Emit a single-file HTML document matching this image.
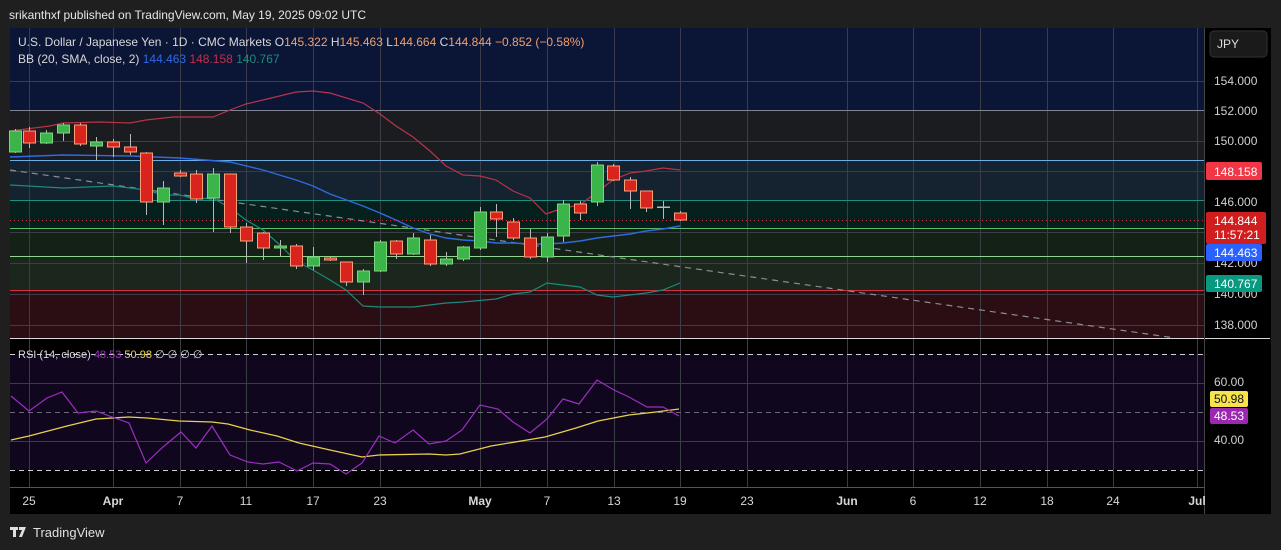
<!DOCTYPE html>
<html><head><meta charset="utf-8"><style>
html,body{margin:0;padding:0;background:#1f1f1f;width:1281px;height:550px;overflow:hidden}
svg{position:absolute;left:0;top:0}
text{font-family:"Liberation Sans",sans-serif}
</style></head><body>
<svg id="s" width="1281" height="550" viewBox="0 0 1281 550" xmlns="http://www.w3.org/2000/svg">
<rect width="1281" height="550" fill="#1f1f1f"/>
<text x="9" y="19" fill="#e6e6e6" font-size="12" textLength="357">srikanthxf published on TradingView.com, May 19, 2025 09:02 UTC</text>
<rect x="10" y="28" width="1261" height="486" fill="#000"/>
<rect x="10" y="28" width="1194" height="82" fill="#0b1536"/>
<rect x="10" y="110" width="1194" height="50" fill="#1b1c20"/>
<rect x="10" y="160" width="1194" height="40" fill="#15222f"/>
<rect x="10" y="200" width="1194" height="28" fill="#06201d"/>
<rect x="10" y="228" width="1194" height="28" fill="#142116"/>
<rect x="10" y="256" width="1194" height="34" fill="#1b261d"/>
<rect x="10" y="290" width="1194" height="48" fill="#2a0e13"/>
<rect x="10" y="354" width="1194" height="116" fill="#10061e"/>
<g id="grid" stroke="#3a3d45" stroke-width="1"></g>
<line x1="10" y1="110.5" x2="1204" y2="110.5" stroke="#80858f"/>
<line x1="10" y1="160.5" x2="1204" y2="160.5" stroke="#6aaee6"/>
<line x1="10" y1="200.5" x2="1204" y2="200.5" stroke="#1e8f80"/>
<line x1="10" y1="228.5" x2="1204" y2="228.5" stroke="#62b86a"/>
<line x1="10" y1="256.5" x2="1204" y2="256.5" stroke="#8fd48f"/>
<line x1="10" y1="290.5" x2="1204" y2="290.5" stroke="#d0333f"/>
<line x1="10" y1="338.5" x2="1270" y2="338.5" stroke="#d8d8d8"/>
<line x1="10" y1="487.5" x2="1204" y2="487.5" stroke="#555"/>
<line x1="10" y1="220.5" x2="1204" y2="220.5" stroke="#d8303a" stroke-dasharray="1 3"/>
<line x1="10" y1="170" x2="1175" y2="338" stroke="#8a8d94" stroke-dasharray="6 5" stroke-width="1.2"/>
<line x1="10" y1="354.5" x2="1204" y2="354.5" stroke="#cfcfcf" stroke-dasharray="5 4"/>
<line x1="10" y1="412.5" x2="1204" y2="412.5" stroke="#6b6b78" stroke-dasharray="5 4"/>
<line x1="10" y1="470.5" x2="1204" y2="470.5" stroke="#cfcfcf" stroke-dasharray="5 4"/>
<polyline fill="none" stroke="#b8334a" stroke-width="1.2" points="10,131 50,126 63,123 100,122 130,123 146,120 173,117 213,117 230,110 246,104 263,100 296,92 313,91 330,93 363,103 380,114 396,126 413,137 430,151 446,166 463,175 480,176 496,180 513,191 530,198 546,214 563,208 580,205 597,192 613,180 630,173 646,171 663,168 680,170"/>
<polyline fill="none" stroke="#2f6ae0" stroke-width="1.4" points="10,157 63,155 130,156 180,158 230,162 263,170 296,180 313,186 330,194 363,206 380,213 396,220 413,228 430,234 446,238 463,240 480,241 496,243 513,243 530,244 547,244 563,243 580,241 597,238 613,236 630,234 646,231 663,229 680,226"/>
<polyline fill="none" stroke="#1c8a7a" stroke-width="1.2" points="10,185 63,188 113,186 130,188 146,190 163,195 180,195 196,199 213,198 230,208 246,220 263,230 280,245 296,261 313,270 330,280 346,290 363,306 380,307 413,307 446,303 463,302 496,299 513,294 530,292 547,283 563,285 580,287 597,295 613,297 646,293 663,290 680,283"/>
<g id="candles"></g>
<polyline fill="none" stroke="#e6d14a" stroke-width="1.3" points="11,440 29,436 67,426 96,419 129,417 147,418 179,421 212,422 228,424 250,430 277,436 299,443 330,450 362,457 379,455 429,454 446,455 460,454 491,446 545,437 576,428 598,421 629,415 656,412 679,409"/>
<polyline fill="none" stroke="#9b2fc0" stroke-width="1.2" points="11,396 29,411 47,398 62,392 78,413 96,411 112,417 129,423 146,463 163,447 181,432 196,448 212,426 230,455 248,462 263,464 279,462 297,471 313,463 330,464 346,474 362,463 379,436 395,443 413,430 429,444 446,441 462,430 480,405 498,409 513,422 530,433 547,419 563,399 579,404 597,380 614,390 629,397 647,407 663,407 679,416"/>
<text x="18" y="46" font-size="12" fill="#d8d8d8">U.S. Dollar / Japanese Yen · 1D · CMC Markets  O<tspan fill="#f0a070">145.322</tspan>  H<tspan fill="#f0a070">145.463</tspan>  L<tspan fill="#f0a070">144.664</tspan>  C<tspan fill="#f0a070">144.844  −0.852 (−0.58%)</tspan></text>
<text x="18" y="63" font-size="12" fill="#d8d8d8">BB (20, SMA, close, 2) <tspan fill="#2f6ae0">144.463</tspan> <tspan fill="#c23048">148.158</tspan> <tspan fill="#1c8a7a">140.767</tspan></text>
<text x="18" y="358" font-size="11" fill="#d8d8d8">RSI (14, close) <tspan fill="#9a35bb">48.53</tspan> <tspan fill="#f0d84a">50.98</tspan> ∅ ∅ ∅ ∅</text>
<line x1="1204.5" y1="28" x2="1204.5" y2="514" stroke="#444"/>
<rect x="1210" y="31" width="57" height="26" rx="4" fill="#1a1a1a" stroke="#333"/>
<text x="1217" y="48" font-size="12" fill="#ddd">JPY</text>
<g font-size="12" fill="#d0d0d0">
<text x="1214" y="85">154.000</text><text x="1214" y="115">152.000</text><text x="1214" y="145">150.000</text>
<text x="1214" y="206">146.000</text><text x="1214" y="267">142.000</text><text x="1214" y="298">140.000</text><text x="1214" y="329">138.000</text>
<text x="1214" y="386">60.00</text><text x="1214" y="444">40.00</text>
</g>
<rect x="1206" y="162" width="56" height="18" rx="2" fill="#f23645"/><text x="1214" y="176" font-size="12" fill="#fff">148.158</text>
<rect x="1206" y="212" width="60" height="32" rx="2" fill="#d01e1e"/><text x="1214" y="225" font-size="12" fill="#fff">144.844</text><text x="1214" y="239" font-size="12" fill="#fff">11:57:21</text>
<rect x="1206" y="244" width="56" height="17" rx="2" fill="#2962ff"/><text x="1214" y="257" font-size="12" fill="#fff">144.463</text>
<rect x="1206" y="275" width="56" height="17" rx="2" fill="#089981"/><text x="1214" y="288" font-size="12" fill="#fff">140.767</text>
<rect x="1210" y="391" width="38" height="16" rx="2" fill="#f7e34a"/><text x="1214" y="403" font-size="12" fill="#111">50.98</text>
<rect x="1210" y="408" width="38" height="16" rx="2" fill="#9c27b0"/><text x="1214" y="420" font-size="12" fill="#fff">48.53</text>
<g font-size="12" fill="#d8d8d8" text-anchor="middle">
<text x="29" y="505">25</text><text x="113" y="505" font-weight="bold">Apr</text><text x="180" y="505">7</text><text x="246" y="505">11</text><text x="313" y="505">17</text><text x="380" y="505">23</text><text x="480" y="505" font-weight="bold">May</text><text x="547" y="505">7</text><text x="614" y="505">13</text><text x="680" y="505">19</text><text x="747" y="505">23</text><text x="847" y="505" font-weight="bold">Jun</text><text x="913" y="505">6</text><text x="980" y="505">12</text><text x="1047" y="505">18</text><text x="1113" y="505">24</text><text x="1197" y="505" font-weight="bold">Jul</text>
</g>
<g fill="#e0e0e0"><rect x="10" y="527" width="8" height="3"/><rect x="13" y="527" width="3" height="10"/><path d="M19 527 h7 l-4 10 h-3 l3 -7 h-3z"/></g>
<text x="33" y="537" font-size="13" fill="#e0e0e0">TradingView</text>
</svg>
<script>
var ns="http://www.w3.org/2000/svg";
var g=document.getElementById("grid");
function ln(x1,y1,x2,y2){var l=document.createElementNS(ns,"line");l.setAttribute("x1",x1);l.setAttribute("y1",y1);l.setAttribute("x2",x2);l.setAttribute("y2",y2);g.appendChild(l);}
[29,113,180,246,313,380,480,547,614,680,747,847,913,980,1047,1113,1197].forEach(function(x){ln(x+.5,28,x+.5,487);});
[81,141,171,232,263,294,325,383,441].forEach(function(y){ln(10,y+.5,1204,y+.5);});
var c=[[15,1,131,152,129,153],[29,0,131,143,127,148],[46,1,133,143,130,144],[63,1,125,133,123,141],[80,0,125,144,123,146],[96,1,142,146,137,160],[113,0,142,147,139,157],[130,0,147,152,134,155],[146,0,153,202,152,215],[163,1,188,202,181,225],[180,0,173,176,170,177],[196,0,174,199,170,203],[213,1,174,198,168,232],[230,0,174,227,174,233],[246,0,227,241,223,263],[263,0,233,248,232,260],[280,1,246,248,240,256],[296,0,246,266,244,269],[313,1,257,266,247,270],[330,0,258,260,257,261],[346,0,262,282,262,286],[363,1,271,282,269,295],[380,1,242,271,240,272],[396,0,241,254,240,259],[413,1,238,254,233,255],[430,0,240,264,235,266],[446,1,259,264,252,266],[463,1,247,259,246,261],[480,1,212,248,207,250],[496,0,212,219,204,237],[513,0,222,238,218,240],[530,0,238,257,229,259],[547,1,237,257,233,262],[563,1,204,236,200,242],[580,0,204,213,201,220],[597,1,165,202,162,206],[613,0,166,180,164,181],[630,0,180,191,177,209],[646,0,191,208,191,212],[663,2,207,207,201,219],[680,0,213,220,211,221]];
var cg=document.getElementById("candles");
c.forEach(function(d){var x=d[0];
var w=document.createElementNS(ns,"line");w.setAttribute("x1",x+.5);w.setAttribute("x2",x+.5);w.setAttribute("y1",d[4]);w.setAttribute("y2",d[5]);w.setAttribute("stroke","#b8b8b8");cg.appendChild(w);
var r=document.createElementNS(ns,"rect");r.setAttribute("x",x-5.5);r.setAttribute("width",12);r.setAttribute("y",d[2]);r.setAttribute("height",Math.max(1,d[3]-d[2]));
if(d[1]==1){r.setAttribute("fill","#3bb54a");r.setAttribute("stroke","#7fd47f");}else if(d[1]==0){r.setAttribute("fill","#d9231d");r.setAttribute("stroke","#f7a07a");}else{r.setAttribute("fill","#b8b8b8");r.setAttribute("stroke","#b8b8b8");r.setAttribute("height",0.5);}
cg.appendChild(r);});
</script>
</body></html>
